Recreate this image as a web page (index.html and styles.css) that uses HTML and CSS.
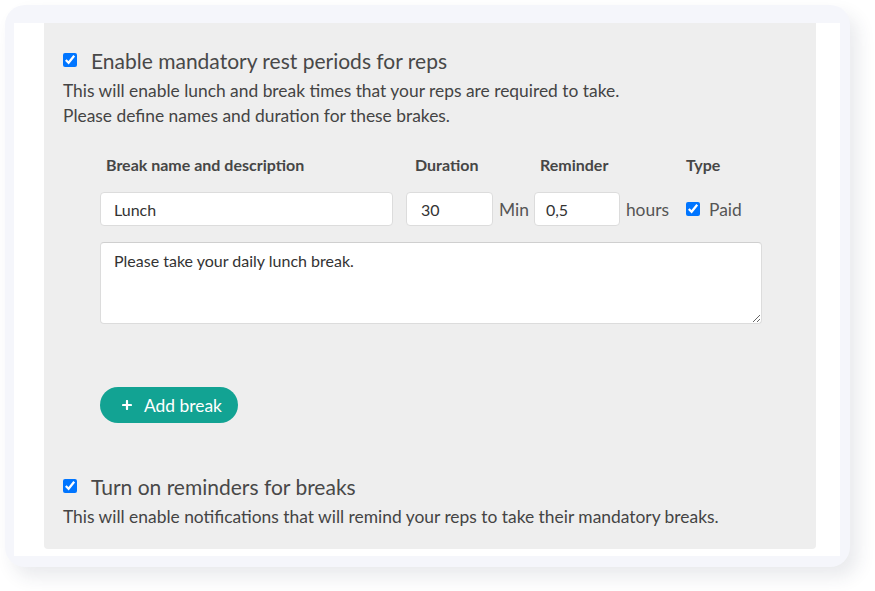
FILE: index.html
```html
<html>

<head>
    <link rel="stylesheet" href="styles.css">
</head>

<body>
    <div class="frame">
        <div class="sheet">
            <div class="panel">
                <label class="option">
                    <input type="checkbox" checked>
                    <span>Enable mandatory rest periods for reps</span>
                </label>
                <p class="desc">This will enable lunch and break times that your reps are required to take.<br>Please define names and duration for these brakes.</p>

                <div class="breaks">
                    <div class="heads">
                        <div class="head head-name">Break name and description</div>
                        <div class="head head-duration">Duration</div>
                        <div class="head head-reminder">Reminder</div>
                        <div class="head">Type</div>
                    </div>
                    <div class="fields">
                        <input class="field field-name" type="text" value="Lunch">
                        <input class="field field-duration" type="text" value="30">
                        <span class="unit unit-min">Min</span>
                        <input class="field field-reminder" type="text" value="0,5">
                        <span class="unit">hours</span>
                        <label class="paid">
                            <input type="checkbox" checked>
                            <span>Paid</span>
                        </label>
                    </div>
                    <textarea class="note">Please take your daily lunch break.</textarea>

                    <button class="add">
                        <svg width="10" height="10" viewBox="0 0 10 10">
                            <path d="M5 1v8M1 5h8" stroke="#fff" stroke-width="2.2" stroke-linecap="round" />
                        </svg>
                        Add break
                    </button>
                </div>

                <label class="option option-second">
                    <input type="checkbox" checked>
                    <span>Turn on reminders for breaks</span>
                </label>
                <p class="desc">This will enable notifications that will remind your reps to take their mandatory breaks.</p>
            </div>
        </div>
    </div>
</body>

</html>
```

FILE: styles.css
```css
body {
    margin: 0;
    background: #fff;
    font-family: Lato, 'Open Sans', sans-serif;
    color: #444;
}

.frame {
    width: 845px;
    height: 562px;
    margin: 5px 0 0 5px;
    box-sizing: border-box;
    padding: 18px 10px 11px 9px;
    background: #f5f6fb;
    border-radius: 20px;
    box-shadow: 8px 10px 18px rgba(40, 45, 80, 0.10);
}

.sheet {
    height: 100%;
    box-sizing: border-box;
    padding: 0 24px 7px 30px;
    background: #fff;
}

.panel {
    height: 100%;
    box-sizing: border-box;
    padding: 24px 19px 0;
    background: #eeeeee;
    border-radius: 0 0 4px 4px;
}

.option {
    display: flex;
    align-items: center;
    height: 26px;
    font-size: 21px;
    color: #484848;
}

.option input {
    width: 14px;
    height: 14px;
    margin: 0 14px 0 0;
}

.option-second {
    margin-top: 50px;
}

.desc {
    margin: 5px 0 0;
    font-size: 17.4px;
    line-height: 25px;
}

.breaks {
    margin-left: 37px;
}

.heads {
    display: flex;
    margin-top: 27px;
    line-height: 20px;
    font-size: 16px;
    font-weight: bold;
    color: #464646;
}

.head-name {
    width: 306px;
    padding-left: 6px;
    box-sizing: border-box;
}

.head-duration {
    width: 128px;
    padding-left: 9px;
    box-sizing: border-box;
}

.head-reminder {
    width: 152px;
    padding-left: 6px;
    box-sizing: border-box;
}

.fields {
    display: flex;
    align-items: center;
    margin-top: 17px;
    height: 34px;
}

.field {
    height: 34px;
    box-sizing: border-box;
    padding: 0 13px;
    font-family: Lato, sans-serif;
    font-size: 16px;
    color: #333;
    background: #fff;
    border: 1px solid #dcdcdc;
    border-radius: 4px;
}

.field-name {
    width: 293px;
    margin-right: 13px;
}

.field-duration {
    width: 87px;
    padding-left: 14px;
}

.field-reminder {
    width: 86px;
    padding-left: 11px;
}

.unit {
    margin: 0 6px;
    font-size: 17.4px;
    color: #555;
}

.unit-min {
    margin-right: 5px;
}

.paid {
    display: flex;
    align-items: center;
    margin-left: 11px;
    font-size: 17.4px;
    color: #555;
}

.paid input {
    width: 14px;
    height: 14px;
    margin: 0 9px 0 0;
}

.note {
    display: block;
    width: 662px;
    height: 82px;
    margin-top: 16px;
    box-sizing: border-box;
    padding: 8px 13px;
    font-family: Lato, sans-serif;
    font-size: 16px;
    color: #333;
    background: #fff;
    border: 1px solid #dcdcdc;
    border-top-color: #cfcfcf;
    border-radius: 4px;
}

.add {
    display: flex;
    align-items: center;
    gap: 12px;
    height: 36px;
    margin-top: 63px;
    padding: 0 16px 0 22px;
    font-family: Lato, sans-serif;
    font-size: 17.4px;
    color: #fff;
    background: #12a393;
    border: none;
    border-radius: 18px;
    cursor: pointer;
}
```
